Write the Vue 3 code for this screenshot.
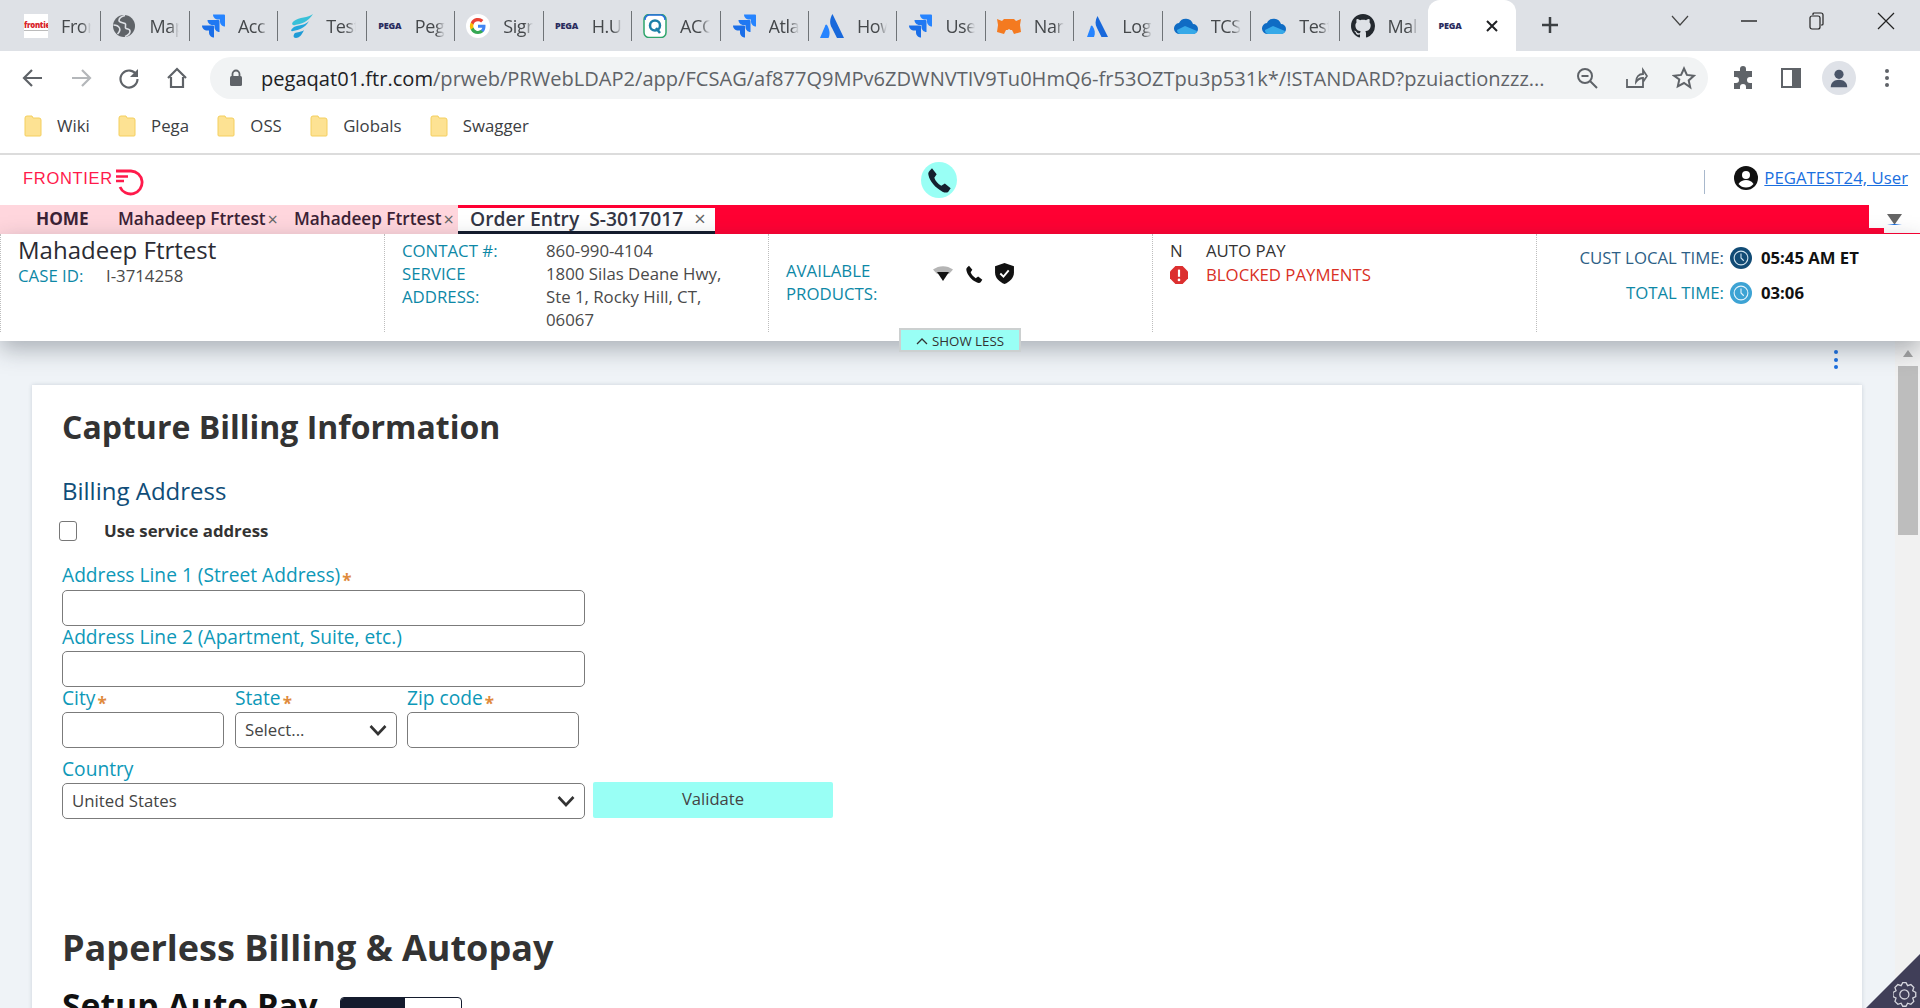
<script setup>
const tabs = [
  { t: 'Fron', i: 'frontier' }, { t: 'Map', i: 'globe' }, { t: 'Acc', i: 'jira' }, { t: 'Test', i: 'wing' },
  { t: 'Peg', i: 'pega' }, { t: 'Sign', i: 'google' }, { t: 'H.U', i: 'pega' }, { t: 'ACC', i: 'q' },
  { t: 'Atla', i: 'jira' }, { t: 'How', i: 'atl' }, { t: 'Use', i: 'jira' }, { t: 'Nar', i: 'fox' },
  { t: 'Log', i: 'atl2' }, { t: 'TCS', i: 'cloud' }, { t: 'Test', i: 'cloud' }, { t: 'Mal', i: 'gh' }
]
const folders = ['Wiki', 'Pega', 'OSS', 'Globals', 'Swagger']
</script>

<template>
  <div class="page">
    <div class="strip">
      <div v-for="(tab, n) in tabs" :key="n" class="tab">
        <span v-if="tab.i === 'frontier'" class="fav fav-frontier">frontier</span>
        <span v-else-if="tab.i === 'pega'" class="fav fav-pega">PEGA</span>
        <svg v-else class="fav" viewBox="0 0 24 24">
          <g v-if="tab.i === 'globe'">
            <circle cx="12" cy="12" r="11" fill="#5f6368" />
            <path d="M13 1.500c-4 1-6 3-6 5s4 2 6 3-1 4 1 5 4 0 4 3-3 4-5 5M1.500 11c3 0 5 1 6 3s0 4-2 6" fill="none" stroke="#dee1e6" stroke-width="1.600" />
          </g>
          <g v-else-if="tab.i === 'jira'">
            <path d="M23 .5H12c0 2.700 2.200 5 5 5h2v2.100c0 2.700 2.200 5 5 5V1.500a1 1 0 0 0-1-1z" fill="#2684ff" />
            <path d="M17.500 6H6.500c0 2.700 2.200 5 5 5h2v2.100c0 2.700 2.200 5 5 5V7a1 1 0 0 0-1-1z" fill="#1f78f2" />
            <path d="M12 11.500H1c0 2.700 2.200 5 5 5h2v2.100c0 2.700 2.200 5 5 5v-11.100a1 1 0 0 0-1-1z" fill="#1a6ee8" />
          </g>
          <g v-else-if="tab.i === 'wing'">
            <path d="M24 0C19 4 10 3 5 7c-3 2-2 5 1 4 6-1 13-3 18-11z" fill="#38c0d8" />
            <path d="M20 7c-3 4-10 4-15 6-3 2-4 5-1 4 6-1 12-3 16-10z" fill="#23a6dc" />
            <path d="M15 16c-2 2-7 2-9 3-2 2-2 5 1 5 3 0 6-3 8-8z" fill="#1e9bd6" />
          </g>
          <g v-else-if="tab.i === 'google'">
            <circle cx="12" cy="12" r="12" fill="#fff" />
            <path d="M19.500 12.300c0-.6 0-1.100-.1-1.600H12v3h4.300a3.700 3.700 0 0 1-1.600 2.400v2h2.600c1.400-1.400 2.200-3.400 2.200-5.800z" fill="#4285f4" />
            <path d="M12 20c2.100 0 3.900-.7 5.300-1.900l-2.600-2a4.800 4.800 0 0 1-7.200-2.500H4.800v2.100A8 8 0 0 0 12 20z" fill="#34a853" />
            <path d="M7.500 13.600a4.800 4.800 0 0 1 0-3.100V8.400H4.800a8 8 0 0 0 0 7.300z" fill="#fbbc05" />
            <path d="M12 7.200c1.200 0 2.300.4 3.100 1.200l2.300-2.300A8 8 0 0 0 4.800 8.400l2.700 2.100A4.800 4.800 0 0 1 12 7.200z" fill="#ea4335" />
          </g>
          <g v-else-if="tab.i === 'q'">
            <rect x="1" y="0.500" width="22" height="23" rx="5" fill="#fff" stroke="#2ea56b" stroke-width="1.500" />
            <path d="M2 6a5 5 0 0 1 4-5h12a5 5 0 0 1 4 5" fill="none" stroke="#2b6de0" stroke-width="1.500" />
            <circle cx="12" cy="11.500" r="5" fill="none" stroke="#1d7fa8" stroke-width="2.500" />
            <path d="M13 14l4 5" stroke="#1d7fa8" stroke-width="2.500" />
          </g>
          <g v-else-if="tab.i === 'atl'">
            <path d="M12.500 0c-3 5-3 10-.5 14l5 10h7z" fill="#1868db" />
            <path d="M7 11c-.6-.8-1.200-.7-1.600.2L0 24h8.500c2-4 1-9-1.500-13z" fill="#2684ff" />
          </g>
          <g v-else-if="tab.i === 'atl2'">
            <path d="M12.500 2c-2.500 4.500-2.500 8.500-.5 12l4.500 9H23z" fill="#1868db" />
            <path d="M7.500 12c-.6-.8-1.200-.7-1.600.2L2 23h7c1.500-3.500 1-7.500-1.500-11z" fill="#2684ff" />
          </g>
          <g v-else-if="tab.i === 'fox'">
            <path d="M0 5l5 2 2-2h10l2 2 5-2-1 6 1 7-7 2-2-4H9l-2 4-7-2 1-7z" fill="#f47a20" />
            <path d="M9 20v-3l3-2 3 2v3z" fill="#dee1e6" />
          </g>
          <g v-else-if="tab.i === 'cloud'">
            <path d="M6 20a5.500 5.500 0 0 1-1-11 7.500 7.500 0 0 1 14 1 5 5 0 0 1 0 10z" fill="#0f6cc4" />
            <path d="M3 16l8-4 12 5a4 4 0 0 1-4 3H6a4 4 0 0 1-3-4z" fill="#36a9e8" />
          </g>
          <path v-else-if="tab.i === 'gh'" transform="scale(1.500)" fill="#24292f" d="M8 0C3.580 0 0 3.580 0 8c0 3.540 2.290 6.530 5.470 7.590.4.070.55-.17.55-.38 0-.19-.01-.82-.01-1.490-2.010.37-2.530-.49-2.690-.94-.09-.23-.48-.94-.82-1.130-.28-.15-.68-.52-.01-.53.630-.01 1.080.58 1.230.82.720 1.210 1.870.87 2.330.66.070-.52.280-.87.510-1.070-1.780-.2-3.640-.89-3.640-3.950 0-.87.310-1.590.820-2.150-.08-.2-.36-1.020.08-2.120 0 0 .67-.21 2.200.82.640-.18 1.320-.27 2-.27s1.360.09 2 .27c1.530-1.040 2.200-.82 2.200-.82.440 1.100.16 1.920.08 2.120.51.560.82 1.270.82 2.150 0 3.070-1.870 3.750-3.650 3.950.290.250.540.730.540 1.480 0 1.070-.01 1.930-.01 2.200 0 .21.150.46.550.38A8.010 8.010 0 0 0 16 8c0-4.420-3.580-8-8-8z" />
        </svg>
        <span class="tab-title">{{ tab.t }}</span>
      </div>
      <div class="tab-active">
        <span class="fav fav-pega small">PEGA</span>
        <svg class="tab-x" viewBox="0 0 14 14"><path d="M2 2l10 10M12 2L2 12" stroke="#202124" stroke-width="2" /></svg>
      </div>
      <svg class="newtab" viewBox="0 0 20 20"><path d="M10 2v16M2 10h16" stroke="#3c4043" stroke-width="2.500" /></svg>
      <div class="winctl">
        <svg width="18" height="12" viewBox="0 0 18 12"><path d="M1 1l8 9 8-9" fill="none" stroke="#444" stroke-width="1.200" /></svg>
        <svg width="16" height="4" viewBox="0 0 16 4"><path d="M0 2h16" stroke="#222" stroke-width="1.400" /></svg>
        <svg width="16" height="18" viewBox="0 0 16 18"><rect x="1" y="4" width="10" height="13" rx="2" fill="none" stroke="#222" stroke-width="1.200" /><path d="M4 3V2a1 1 0 0 1 1-1h7a2 2 0 0 1 2 2v9a1 1 0 0 1-1 1h-1" fill="none" stroke="#222" stroke-width="1.200" /></svg>
        <svg width="18" height="18" viewBox="0 0 18 18"><path d="M1 1l16 16M17 1L1 17" stroke="#222" stroke-width="1.200" /></svg>
      </div>
    </div>

    <div class="toolbar">
      <div class="nav-icons">
        <svg viewBox="0 0 24 24"><path d="M21 12H4M11 4l-8 8 8 8" fill="none" stroke="#5f6368" stroke-width="2.200" /></svg>
        <svg viewBox="0 0 24 24"><path d="M3 12h17M13 4l8 8-8 8" fill="none" stroke="#b4b7ba" stroke-width="2.200" /></svg>
        <svg viewBox="0 0 24 24"><path d="M19.500 9A8.500 8.500 0 1 0 20.500 13" fill="none" stroke="#5f6368" stroke-width="2.200" /><path d="M21 3v8h-8z" fill="#5f6368" /></svg>
        <svg viewBox="0 0 24 24"><path d="M3 12l9-9 9 9M6 11v10h12V11" fill="none" stroke="#5f6368" stroke-width="2.200" /></svg>
      </div>
      <div class="omnibox">
        <svg class="lock" viewBox="0 0 14 18"><path d="M3.500 8V5a3.500 3.500 0 0 1 7 0v3" fill="none" stroke="#5f6368" stroke-width="1.800" /><rect x="1" y="7" width="12" height="10" rx="1.500" fill="#5f6368" /></svg>
        <div class="url"><span class="host">pegaqat01.ftr.com</span>/prweb/PRWebLDAP2/app/FCSAG/af877Q9MPv6ZDWNVTIV9Tu0HmQ6-fr53OZTpu3p531k*/!STANDARD?pzuiactionzzz...</div>
        <div class="omni-icons">
          <svg viewBox="0 0 24 24"><circle cx="10" cy="10" r="7" fill="none" stroke="#5f6368" stroke-width="2" /><path d="M15 15l7 7M6.500 10h7" stroke="#5f6368" stroke-width="2" /></svg>
          <svg viewBox="0 0 24 24"><path d="M3 13v8h16v-6M12 16c0-5 3-8 7-8V4l4 6-4 6v-4c-3 0-5 1-7 4z" fill="none" stroke="#5f6368" stroke-width="1.800" /></svg>
          <svg viewBox="0 0 24 24"><path d="M12 2.500l2.900 6.400 7 .8-5.200 4.700 1.500 6.900L12 17l-6.200 3.300 1.500-6.900L2.100 9.700l7-.8z" fill="none" stroke="#5f6368" stroke-width="2" /></svg>
        </div>
      </div>
      <div class="ext-icons">
        <svg viewBox="0 0 24 24"><path d="M9 3a3 3 0 0 1 6 0v2h6v6h-2a3 3 0 0 0 0 6h2v6h-6v-2a3 3 0 0 0-6 0v2H3v-6h2a3 3 0 0 0 0-6H3V5h6z" fill="#5f6368" /></svg>
        <svg viewBox="0 0 24 24"><path d="M3 3h18v18H3z" fill="none" stroke="#5f6368" stroke-width="2" /><path d="M13 3h8v18h-8z" fill="#5f6368" /></svg>
        <span class="avatar"><svg viewBox="0 0 24 24"><circle cx="12" cy="8" r="5" fill="#4a5568" /><path d="M3 22c0-5 4-8 9-8s9 3 9 8z" fill="#4a5568" /></svg></span>
        <svg viewBox="0 0 24 24"><circle cx="12" cy="5" r="2" fill="#5f6368" /><circle cx="12" cy="12" r="2" fill="#5f6368" /><circle cx="12" cy="19" r="2" fill="#5f6368" /></svg>
      </div>
    </div>

    <div class="bookmarks">
      <div v-for="f in folders" :key="f" class="bm">
        <svg viewBox="0 0 18 22"><path d="M1 3a2 2 0 0 1 2-2h5l1 2h6a2 2 0 0 1 2 2v15a1 1 0 0 1-1 1H2a1 1 0 0 1-1-1z" fill="#fde293" stroke="#f4cf5e" /></svg>
        <span>{{ f }}</span>
      </div>
    </div>

    <header class="apphead">
      <div class="logo">
        <span class="logo-text">FRONTIER</span>
        <svg class="logo-mark" viewBox="0 0 30 28">
          <path d="M2 3H17a11.500 11.500 0 1 1-11 16" fill="none" stroke="#ff1a4b" stroke-width="2.800" />
          <path d="M2 8.500h12M2 13h8" stroke="#ff1a4b" stroke-width="2.500" />
        </svg>
      </div>
      <div class="callbtn">
        <svg viewBox="0 0 24 24"><path d="M6 2l4 5-2 3c1 3 3 5 6 7l3-2 5 4-2 3c-1 1-3 1-5 0C9 19 4 13 3 8c-.5-2 0-3 1-4z" fill="#14202e" /></svg>
      </div>
      <div class="user">
        <span class="divider"></span>
        <svg class="usericon" viewBox="0 0 24 24"><circle cx="12" cy="12" r="12" fill="#111" /><circle cx="12" cy="9" r="4" fill="#fff" /><path d="M4.500 18c2-3 4.500-4 7.500-4s5.500 1 7.500 4c-2 2.500-4.500 3.500-7.500 3.500S6.500 20.500 4.500 18z" fill="#fff" /></svg>
        <a class="userlink">PEGATEST24, User</a>
      </div>
    </header>

    <nav class="tabbar">
      <div class="pinks">
        <span class="ptab home">HOME</span>
        <span class="ptab first">Mahadeep Ftrtest<i class="x">×</i></span>
        <span class="ptab second">Mahadeep Ftrtest<i class="x">×</i></span>
      </div>
      <div class="order"><span>Order Entry&nbsp; S-3017017</span><i class="x big">×</i></div>
      <div class="tabmenu"><span class="tri"></span></div>
    </nav>

    <section class="panel">
      <div class="cell c1">
        <div class="cust">Mahadeep Ftrtest</div>
        <div class="kv"><span class="lbl w88">CASE ID:</span><span class="val">I-3714258</span></div>
      </div>
      <div class="cell c2">
        <div class="contact">
          <span class="lbl">CONTACT #:</span><span class="val">860-990-4104</span>
          <span class="lbl svc">SERVICE ADDRESS:</span><span class="val">1800 Silas Deane Hwy, Ste 1, Rocky Hill, CT, 06067</span>
        </div>
      </div>
      <div class="cell c3">
        <div class="lbl prods">AVAILABLE PRODUCTS:</div>
        <div class="prod-icons">
          <svg width="20" height="15" viewBox="0 0 20 15"><path d="M0 3.500c6-4.500 14-4.500 20 0l-4 4.500H4z" fill="#b5b5b5" /><path d="M4 6h12l-6 9z" fill="#111" /></svg>
          <svg width="20" height="20" viewBox="0 0 24 24"><path d="M6 2l4 5-2 3c1 3 3 5 6 7l3-2 5 4-2 3c-1 1-3 1-5 0C9 19 4 13 3 8c-.5-2 0-3 1-4z" fill="#111" /></svg>
          <svg width="19" height="21" viewBox="0 0 18 20"><path d="M9 0l9 3v6c0 5-4 9-9 11-5-2-9-6-9-11V3z" fill="#111" /><path d="M5 10l3 3 5-6" fill="none" stroke="#fff" stroke-width="1.800" /></svg>
        </div>
      </div>
      <div class="cell c4">
        <div class="kv"><span class="flag">N</span><span class="dark">AUTO PAY</span></div>
        <div class="kv"><svg class="flag-icon" viewBox="0 0 20 20"><path d="M6 0h8l6 6v8l-6 6H6l-6-6V6z" fill="#dc2f2f" /><path d="M10 4v8" stroke="#fff" stroke-width="2.400" /><circle cx="10" cy="15.500" r="1.500" fill="#fff" /></svg><span class="red">BLOCKED PAYMENTS</span></div>
      </div>
      <div class="cell c5">
        <div class="timerow">
          <span class="tlbl navy">CUST LOCAL TIME:</span>
          <svg class="clock" viewBox="0 0 24 24"><circle cx="12" cy="12" r="12" fill="#114b75" /><circle cx="12" cy="12" r="7.500" fill="none" stroke="#cfe2ee" stroke-width="1.200" /><path d="M12 7v5l3 3" fill="none" stroke="#cfe2ee" stroke-width="1.200" /></svg>
          <b class="tval">05:45 AM ET</b>
        </div>
        <div class="timerow">
          <span class="tlbl">TOTAL TIME:</span>
          <svg class="clock" viewBox="0 0 24 24"><circle cx="12" cy="12" r="12" fill="#3da3d4" /><circle cx="12" cy="12" r="7.500" fill="none" stroke="#e4f3fb" stroke-width="1.200" /><path d="M12 7v5l3 3" fill="none" stroke="#e4f3fb" stroke-width="1.200" /></svg>
          <b class="tval">03:06</b>
        </div>
      </div>
      <button class="showless"><svg width="12" height="8" viewBox="0 0 12 8"><path d="M1 7l5-5 5 5" fill="none" stroke="#333" stroke-width="1.300" /></svg>SHOW LESS</button>
    </section>

    <div class="workspace">
      <main class="content">
        <div class="kebab"><i></i><i></i><i></i></div>
        <div class="card">
          <h1>Capture Billing Information</h1>
          <h2>Billing Address</h2>
          <div class="check"><span class="box"></span><span>Use service address</span></div>
          <div class="flabel first-label">Address Line 1 (Street Address)<em>*</em></div>
          <div class="input wide"></div>
          <div class="flabel l2">Address Line 2 (Apartment, Suite, etc.)</div>
          <div class="input wide"></div>
          <div class="row3">
            <div class="f f-city"><div class="flabel">City<em>*</em></div><div class="input"></div></div>
            <div class="f f-state"><div class="flabel">State<em>*</em></div>
              <div class="input select"><span>Select...</span><svg width="18" height="12" viewBox="0 0 18 12"><path d="M1.500 2l7.500 8 7.500-8" fill="none" stroke="#333" stroke-width="2.600" /></svg></div>
            </div>
            <div class="f f-zip"><div class="flabel">Zip code<em>*</em></div><div class="input"></div></div>
          </div>
          <div class="flabel country">Country</div>
          <div class="country-row">
            <div class="input wide select"><span>United States</span><svg width="18" height="12" viewBox="0 0 18 12"><path d="M1.500 2l7.500 8 7.500-8" fill="none" stroke="#333" stroke-width="2.600" /></svg></div>
            <button class="validate">Validate</button>
          </div>
          <h1 class="paper">Paperless Billing &amp; Autopay</h1>
          <div class="setup"><span>Setup Auto Pay</span>
            <div class="toggle"><i></i></div>
          </div>
        </div>
      </main>
      <aside class="scroll">
        <span class="up"></span>
        <span class="thumb"></span>
      </aside>
      <div class="corner">
        <svg width="26" height="26" viewBox="0 0 24 24"><path d="M12 1.500l1.500 2.800 3-1 2.700 2.700-1 3 2.800 1.500v3.800l-2.800 1.500 1 3-2.700 2.700-3-1-1.500 2.800H9l-1.500-2.800-3 1-2.700-2.700 1-3L0 14.300v-3.800l2.800-1.500-1-3L4.500 3.300l3 1L9 1.500z" fill="#403e58" stroke="#d5d5dd" stroke-width="1.200" /><circle cx="10.500" cy="12.400" r="4.200" fill="none" stroke="#d5d5dd" stroke-width="1.200" /></svg>
      </div>
    </div>
  </div>
</template>

<style>
html, body { margin: 0; height: 100%; overflow: hidden; background: #fff; }
</style>

<style scoped>
* { box-sizing: border-box; }
.page { width: 1920px; height: 1008px; display: flex; flex-direction: column; overflow: hidden; font-family: "Open Sans", "Liberation Sans", sans-serif; color: #333; }

.strip { height: 51px; flex: none; background: #dee1e6; display: flex; align-items: stretch; padding-left: 13px; }
.tab { width: 88.440px; flex: none; display: flex; align-items: center; gap: 13px; padding: 0 0 0 11px; position: relative; overflow: hidden; }
.tab::after { content: ""; position: absolute; right: 0; top: 11px; height: 30px; width: 1px; background: #6f7377; }
.tab:nth-child(16)::after { display: none; }
.fav { width: 24px; height: 24px; flex: none; display: block; }
.fav-frontier { background: linear-gradient(#fff 66%, #bbb 66%, #bbb 72%, #fff 72%); color: #d8232a; font-size: 7.800px; font-weight: 800; line-height: 22px; text-align: left; overflow: hidden; letter-spacing: -0.300px; white-space: nowrap; }
.fav-pega { color: #2a2c5e; font-size: 9px; font-weight: 800; line-height: 24px; text-align: center; letter-spacing: -0.200px; }
.tab-title { font-size: 18px; letter-spacing: -0.400px; color: #45484b; white-space: nowrap; width: 30px; overflow: hidden; -webkit-mask-image: linear-gradient(to right, #000 70%, transparent 100%); mask-image: linear-gradient(to right, #000 70%, transparent 100%); }
.tab-active { width: 88px; flex: none; background: #fff; border-radius: 12px 12px 0 0; display: flex; align-items: center; padding-left: 10px; gap: 23px; }
.tab-x { width: 14px; height: 14px; flex: none; }
.newtab { width: 20px; height: 20px; margin: 15px 0 0 24px; flex: none; }
.winctl { margin-left: 111px; display: flex; align-items: center; gap: 52px; height: 42px; }

.toolbar { height: 54px; flex: none; display: flex; align-items: center; background: #fff; }
.nav-icons { display: flex; width: 210px; padding-left: 21px; gap: 24px; }
.nav-icons svg { width: 24px; height: 24px; flex: none; }
.omnibox { width: 1498px; height: 42px; background: #f1f3f4; border-radius: 21px; display: flex; align-items: center; padding-left: 19px; }
.lock { width: 14px; height: 18px; flex: none; }
.url { margin-left: 18px; width: 1290px; font-size: 20.070px; color: #5f6368; white-space: nowrap; overflow: hidden; }
.host { color: #202124; }
.omni-icons { display: flex; gap: 24.500px; margin-left: 24px; }
.omni-icons svg { width: 24px; height: 24px; flex: none; }
.ext-icons { display: flex; align-items: center; margin-left: 23px; gap: 24px; }
.ext-icons svg { width: 24px; height: 24px; flex: none; display: block; }
.avatar { width: 34px; height: 34px; border-radius: 50%; background: #dfe2e8; display: flex; align-items: center; justify-content: center; margin: 0 -5px; }
.avatar svg { width: 22px; height: 22px; }

.bookmarks { height: 50px; flex: none; display: flex; align-items: center; background: #fff; border-bottom: 2px solid #dcdcdc; padding: 0 0 7px 24px; gap: 28.300px; }
.bm { display: flex; align-items: center; gap: 15px; font-size: 16.800px; color: #3c4043; }
.bm svg { width: 18px; height: 22px; flex: none; }

.apphead { height: 50px; flex: none; display: flex; align-items: center; position: relative; background: #fff; padding: 0 12px 0 23px; }
.logo { display: flex; align-items: center; width: 898px; }
.logo-text { font-family: "Liberation Sans", sans-serif; color: #ff1a4b; font-size: 16.500px; letter-spacing: 0.700px; margin-top: -3px; }
.logo-mark { width: 30px; height: 28px; margin: 3px 0 0 1px; flex: none; }
.callbtn { width: 36px; height: 36px; border-radius: 50%; background: #99fff5; display: flex; align-items: center; justify-content: center; flex: none; }
.callbtn svg { width: 28px; height: 28px; }
.user { margin-left: auto; display: flex; align-items: center; }
.divider { width: 1px; height: 24px; background: #a8b8cc; margin-right: 29px; margin-top: 4px; }
.usericon { width: 24px; height: 24px; flex: none; margin-right: 6px; margin-top: -5px; }
.userlink { color: #1a6fe0; font-size: 16.800px; text-decoration: underline; margin-top: -6px; }

.tabbar { height: 29px; flex: none; display: flex; background: #ff0033; position: relative; }
.pinks { width: 458px; flex: none; background: #ffd6dd; display: flex; align-items: center; color: #3b2235; font-weight: 600; font-size: 17.200px; padding-bottom: 2px; }
.ptab { white-space: nowrap; display: flex; align-items: center; }
.home { margin-left: 36px; font-weight: 700; width: 82px; }
.first { width: 176px; }
.x { font-style: normal; font-weight: 400; color: #666; font-size: 18px; line-height: 1; margin-left: 2px; }
.order { margin-top: 3px; width: 257px; background: #fff; border-bottom: 3px solid #141b2d; display: flex; align-items: center; padding: 0 0 2px 12px; color: #333645; font-weight: 600; font-size: 19.300px; white-space: nowrap; line-height: 21px; }
.x.big { font-size: 20px; margin-left: 11px; }
.tabmenu { position: absolute; right: 0; top: 0; width: 51px; height: 23px; background: #fff; display: flex; align-items: center; justify-content: center; }
.tabmenu::after { content: ""; position: absolute; left: 15px; right: 0; bottom: -5px; height: 5px; background: #fff; }
.tri { width: 15px; height: 11px; border-top: 10px solid #666; border-left: 7.500px solid transparent; border-right: 7.500px solid transparent; border-bottom: 1px solid #1a6fe0; position: relative; top: 3px; }

.panel { height: 107px; flex: none; position: relative; z-index: 2; background: #fff; display: grid; grid-template-columns: repeat(4, 384px) 1fr; box-shadow: 0 8px 22px rgba(40, 50, 60, 0.35); align-items: start; }
.cell { height: 98px; border-left: 1px dotted #bdbdbd; font-size: 16.800px; line-height: 23px; }
.c1 { padding: 2px 0 0 17px; }
.cust { font-size: 24px; line-height: 28px; color: #2b2b33; }
.kv { display: flex; align-items: center; }
.lbl { color: #0d88a6; }
.w88 { width: 88px; }
.val { color: #4a4a4a; }
.c2 { padding: 5px 0 0 17px; }
.contact { display: grid; grid-template-columns: 144px 185px; }
.svc { padding-right: 30px; }
.c3 { padding: 25px 0 0 17px; display: flex; }
.prods { width: 120px; }
.prod-icons { display: flex; gap: 11px; margin-left: 27px; align-items: center; height: 23px; margin-top: 3px; }
.c4 { padding: 5px 0 0 17px; }
.kv + .kv { margin-top: 1px; }
.flag { width: 36px; color: #333; }
.flag-icon { width: 18px; height: 18px; flex: none; margin-right: 18px; }
.dark { color: #333; }
.red { color: #d93025; }
.c5 { padding: 12px 0 0 0; display: flex; flex-direction: column; gap: 13px; }
.timerow { display: grid; grid-template-columns: 187px 22px auto; column-gap: 6px; align-items: center; height: 22px; }
.tlbl { text-align: right; color: #0d88a6; white-space: nowrap; }
.tlbl.navy { color: #2d5f86; }
.clock { width: 22px; height: 22px; }
.tval { color: #111; font-weight: 700; font-size: 16.700px; margin-left: 3px; }
.showless { position: absolute; left: 899px; top: 94px; width: 122px; height: 24px; background: #99fff5; border: 2px solid #ccd0d0; padding: 1px 0 0; font: 13.300px "Open Sans", sans-serif; color: #333; display: flex; align-items: center; justify-content: center; gap: 4px; }

.workspace { flex: 1; min-height: 0; display: flex; background: #eff3f7; position: relative; overflow: hidden; }
.content { flex: 1; min-width: 0; padding: 9px 33px 0 32px; position: relative; }
.kebab { height: 35px; margin-right: 24px; display: flex; flex-direction: column; align-items: flex-end; gap: 3.500px; }
.kebab i { width: 4px; height: 4px; background: #1a6fe0; border-radius: 50%; display: block; }
.card { background: #fff; box-shadow: 0 0 4px rgba(40, 60, 90, 0.18); padding: 20px 30px 0; width: 1830px; height: 640px; }
h1 { margin: 0; font-size: 32px; line-height: 44px; font-weight: 700; color: #333; }
h2 { margin: 27px 0 0; font-size: 24px; line-height: 30px; font-weight: 400; color: #0f4d78; }
.check { margin-top: 15px; display: flex; align-items: center; height: 20px; font-size: 16.800px; font-weight: 700; color: #333; margin-left: -3px; }
.check > span:last-child { position: relative; top: -1px; }
.box { width: 18px; height: 20px; border: 1px solid #777; border-radius: 3px; background: #fff; margin-right: 27px; flex: none; }
.flabel { font-size: 19.200px; line-height: 22px; color: #0d98b8; white-space: nowrap; }
.flabel em { color: #e08a3c; font-style: normal; font-size: 17px; font-weight: 700; margin-left: 2px; line-height: 1; position: relative; top: 5px; }
.first-label { margin-top: 23px; margin-bottom: 4px; }
.l2 { margin-bottom: 3px; }
.input { height: 36px; border: 1px solid #7b7b7b; border-radius: 5px; background: #fff; }
.wide { width: 523px; }
.row3 { display: flex; }
.row3 .flabel { margin-bottom: 3px; }
.f-city { width: 162px; margin-right: 11px; }
.f-state { width: 162px; margin-right: 10px; }
.f-zip { width: 172px; }
.select { display: flex; align-items: center; justify-content: space-between; padding: 0 9px; font-size: 16.800px; color: #444; }
.select span { position: relative; top: -1px; }
.country { margin-top: 10px; margin-bottom: 3px; }
.country-row { display: flex; align-items: flex-start; gap: 8px; }
.validate { width: 240px; height: 36px; margin-top: -1px; background: #99fff5; border: none; border-radius: 2px; font: 16.600px "Open Sans", sans-serif; color: #444; padding: 0 0 4px; }
.paper { margin-top: 104px; font-size: 36px; line-height: 50px; }
.setup { margin-top: 10px; display: flex; align-items: flex-start; font-size: 33.700px; line-height: 44px; font-weight: 700; color: #111; white-space: nowrap; }
.toggle { margin: 14px 0 0 22px; width: 122px; height: 36px; border: 1px solid #141b2d; border-radius: 4px; overflow: hidden; background: #fff; }
.toggle i { display: block; width: 64px; height: 100%; background: #141b2d; }

.scroll { width: 25px; flex: none; background: #f1f1f1; display: flex; flex-direction: column; align-items: center; padding-top: 9px; }
.up { width: 0; height: 0; border-left: 5px solid transparent; border-right: 5px solid transparent; border-bottom: 7px solid #a3a3a3; }
.thumb { margin-top: 9px; width: 20px; height: 169px; background: #bdbdbd; }
.corner { position: absolute; right: 0; bottom: 0; width: 54px; height: 54px; background: #403e58; clip-path: polygon(100% 0, 100% 100%, 0 100%); }
.corner svg { position: absolute; right: 1px; bottom: 1px; }
</style>
